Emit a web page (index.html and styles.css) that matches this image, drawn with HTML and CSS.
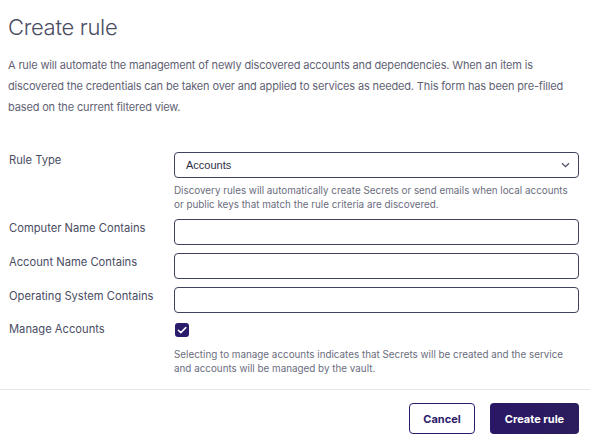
FILE: index.html
```html
<!DOCTYPE html>
<html>
<head>
<meta charset="utf-8">
<link rel="stylesheet" href="styles.css">
</head>
<body>
<div class="page">
  <div class="content">
    <h1 class="title">Create rule</h1>
    <p class="intro">A rule will automate the management of newly discovered accounts and dependencies. When an item is discovered the credentials can be taken over and applied to services as needed. This form has been pre-filled based on the current filtered view.</p>
    <div class="form">
      <div class="label label-select">Rule Type</div>
      <div class="field">
        <div class="select">
          <span>Accounts</span>
          <svg class="chev" width="9" height="6" viewBox="0 0 9 6"><path d="M1 1.2 L4.5 4.6 L8 1.2" fill="none" stroke="#4a4d63" stroke-width="1.2"/></svg>
        </div>
        <div class="help">Discovery rules will automatically create Secrets or send emails when local accounts or public keys that match the rule criteria are discovered.</div>
      </div>
      <div class="label">Computer Name Contains</div>
      <div class="field"><div class="input"></div></div>
      <div class="label">Account Name Contains</div>
      <div class="field"><div class="input"></div></div>
      <div class="label">Operating System Contains</div>
      <div class="field"><div class="input"></div></div>
      <div class="label label-check">Manage Accounts</div>
      <div class="field field-check">
        <div class="checkbox">
          <svg width="14" height="14" viewBox="0 0 14 14"><path d="M3.3 7.2 L5.8 9.6 L10.8 4.6" fill="none" stroke="#fff" stroke-width="1.5" stroke-linecap="round" stroke-linejoin="round"/></svg>
        </div>
        <div class="help help-check">Selecting to manage accounts indicates that Secrets will be created and the service and accounts will be managed by the vault.</div>
      </div>
    </div>
  </div>
  <div class="footer">
    <button class="btn btn-outline">Cancel</button>
    <button class="btn btn-primary">Create rule</button>
  </div>
</div>
</body>
</html>
```

FILE: styles.css
```css
html, body {
  margin: 0;
  padding: 0;
  background: #fff;
}
body {
  font-family: Inter, "Noto Sans", sans-serif;
  color: #4a4d63;
}
.page {
  width: 590px;
}
.content {
  padding: 13px 11px 0 8px;
}
.title {
  margin: 0;
  font-size: 22px;
  font-weight: 300;
  line-height: 28px;
  color: #4a4d63;
  letter-spacing: -0.3px;
}
.intro {
  margin: 14px 0 0 0;
  font-size: 11px;
  letter-spacing: -0.15px;
  line-height: 21px;
  color: #5f6274;
}
.form {
  margin-top: 34px;
  display: grid;
  grid-template-columns: 166px 1fr;
  row-gap: 8px;
}
.label {
  font-size: 11.2px;
  line-height: 13px;
  color: #4a4d63;
  padding-left: 1px;
  padding-top: 3px;
}
.label-select {
  padding-top: 2px;
}
.label-check {
  padding-top: 2px;
}
.select {
  height: 24px;
  border: 1px solid #3f425c;
  border-radius: 4px;
  display: flex;
  align-items: center;
  justify-content: space-between;
  padding: 0 8px 0 11px;
  font-family: "Liberation Sans", Arial, sans-serif;
  font-size: 11px;
  color: #2d3044;
}
.chev {
  display: block;
}
.input {
  height: 24px;
  border: 1px solid #3f425c;
  border-radius: 4px;
}
.help {
  font-size: 9.85px;
  line-height: 14px;
  color: #6a6d7d;
  margin-top: 5px;
}
.field-check {
  padding-top: 2px;
}
.help-check {
  margin-top: 10px;
}
.checkbox {
  width: 14px;
  height: 14px;
  border-radius: 3px;
  background: #2b1b6b;
  margin-left: 1px;
}
.checkbox svg {
  display: block;
}
.footer {
  margin-top: 14px;
  border-top: 1px solid #e6e6ea;
  display: flex;
  justify-content: flex-end;
  gap: 15px;
  padding: 13px 11px 0 0;
}
.btn {
  height: 31px;
  border-radius: 4px;
  font-family: Inter, "Noto Sans", sans-serif;
  font-size: 11px;
  font-weight: 700;
  cursor: pointer;
}
.btn-outline {
  width: 66px;
  background: #fff;
  border: 1px solid #2b1b6b;
  color: #2b1b6b;
}
.btn-primary {
  width: 89px;
  border: none;
  background: linear-gradient(90deg, #2a1765, #2c1d5e);
  color: #fff;
}
```
